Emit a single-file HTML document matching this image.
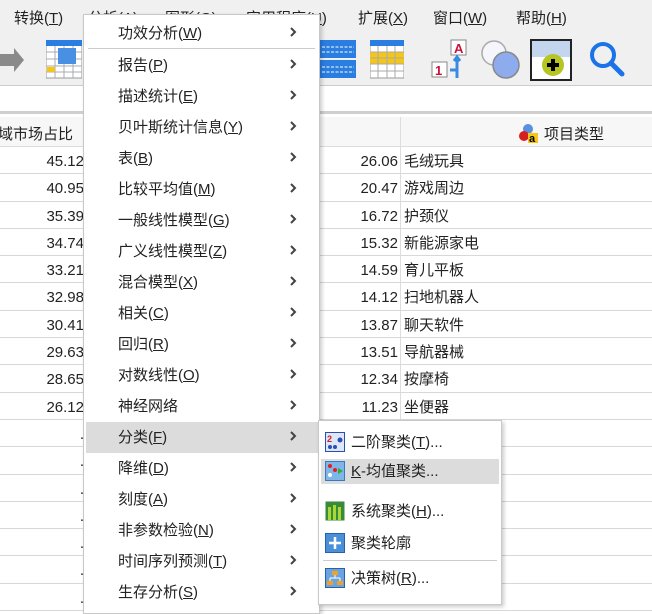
<!DOCTYPE html>
<html><head><meta charset="utf-8"><style>
*{margin:0;padding:0;box-sizing:border-box}
body{width:652px;height:600px;overflow:hidden;background:#fff;font-family:"Liberation Sans","Noto Sans CJK SC",sans-serif;font-size:15px;color:#222;position:relative}
.abs{position:absolute}
.menubar{left:0;top:0;width:652px;height:36px;background:#f0f0f0}
.menubar span{position:absolute;top:7px;font-size:15px}
.tool{left:0;top:36px;width:652px;height:50px;background:#f0f0f0;border-bottom:1px solid #ccc}
.band{left:0;top:86px;width:652px;height:28px;background:#fff;border-bottom:3px solid #cfcfcf}
.hdr{left:0;top:117px;width:652px;height:30px;background:#f7f7f7;border-bottom:1px solid #ddd}
.row{position:absolute;left:0;width:652px;height:27.3px;border-bottom:1px solid #d8d8d8}
.menu{left:83px;top:14px;width:237px;height:600px;background:#fff;border:1px solid #c8c8c8;box-shadow:2px 2px 4px rgba(0,0,0,.2)}
.mi{position:absolute;left:34px;font-size:15px}
.ar{position:absolute;left:205px;width:8px;height:12px}
.sub{left:318px;top:420px;width:184px;height:185px;background:#fff;border:1px solid #c8c8c8;box-shadow:2px 2px 4px rgba(0,0,0,.2)}
.si{position:absolute;left:32px;font-size:15px}
.ic{position:absolute;left:6px;width:20px;height:20px}
u{text-decoration:underline}
</style></head><body>
<svg width="0" height="0" style="position:absolute"><defs><symbol id="chev" viewBox="0 0 8 12"><path d="M2 2 L6 6 L2 10" stroke="#444" stroke-width="2" fill="none"/></symbol></defs></svg>
<div class="abs menubar">
<span style="left:14px">转换(<u>T</u>)</span>
<span style="left:88px">分析(A)</span>
<span style="left:165px">图形(G)</span>
<span style="left:246px">实用程序(<u>U</u>)</span>
<span style="left:358px">扩展(<u>X</u>)</span>
<span style="left:433px">窗口(<u>W</u>)</span>
<span style="left:516px">帮助(<u>H</u>)</span>
</div>
<div class="abs tool">
<svg class="abs" style="left:0;top:10px" width="25" height="30"><path d="M0 8 L14 8 L14 2 L24 14 L14 26 L14 20 L0 20Z" fill="#8a8a8a"/></svg>
<svg class="abs" style="left:46px;top:4px" width="36" height="40"><rect x="0" y="0" width="36" height="38" fill="#fff" stroke="#999"/><rect x="0" y="0" width="36" height="6" fill="#2a7de1"/><path d="M0 12H36M0 19H36M0 26H36M0 32H36M9 6V38M18 6V38M27 6V38" stroke="#aab" /><rect x="1" y="27" width="8" height="5" fill="#f5c518"/><path d="M12 8 L30 8 L30 24 L12 24Z" fill="#4a90e2"/></svg>
<svg class="abs" style="left:320px;top:4px" width="36" height="40"><rect x="0" y="0" width="36" height="18" fill="#2a7de1"/><rect x="0" y="20" width="36" height="18" fill="#2a7de1"/><path d="M2 7H34M2 12H34M2 27H34M2 32H34" stroke="#fff" stroke-dasharray="3 1.5"/></svg>
<svg class="abs" style="left:370px;top:4px" width="34" height="40"><rect x="0" y="0" width="34" height="38" fill="#fff" stroke="#999"/><rect x="0" y="0" width="34" height="6" fill="#2a7de1"/><rect x="0" y="12" width="34" height="12" fill="#f5c518"/><path d="M0 12H34M0 18H34M0 24H34M0 31H34M8 6V38M17 6V38M25 6V38" stroke="#aaa"/></svg>
<svg class="abs" style="left:430px;top:2px" width="40" height="44"><rect x="21" y="2" width="15" height="15" fill="#fff" stroke="#888"/><text x="24" y="15" font-size="13" font-weight="bold" fill="#d0103a" font-family="Liberation Sans">A</text><rect x="2" y="24" width="15" height="15" fill="#fff" stroke="#888"/><text x="5" y="37" font-size="13" font-weight="bold" fill="#d0103a" font-family="Liberation Sans">1</text><path d="M20 32 L27 32 L27 20 M24 23 L27 19 L30 23 M27 32 L27 40" stroke="#3a8be0" stroke-width="3" fill="none"/></svg>
<svg class="abs" style="left:480px;top:3px" width="42" height="42"><circle cx="14" cy="14" r="12" fill="#f4f6fb" stroke="#aaa" stroke-width="1.5"/><circle cx="26" cy="26" r="13" fill="#8eabee" stroke="#888" stroke-width="1.5"/></svg>
<svg class="abs" style="left:530px;top:3px" width="42" height="42"><rect x="1" y="1" width="40" height="40" fill="#fff" stroke="#222" stroke-width="2"/><rect x="2" y="2" width="38" height="16" fill="#c3d6ee"/><circle cx="23" cy="26" r="11" fill="#b5c622"/><path d="M23 20V32M17 26H29" stroke="#000" stroke-width="4"/></svg>
<svg class="abs" style="left:588px;top:4px" width="40" height="40"><circle cx="15" cy="15" r="11" fill="none" stroke="#1a73e8" stroke-width="4"/><path d="M23 23 L34 34" stroke="#1a73e8" stroke-width="5" stroke-linecap="round"/></svg>
</div>
<div class="abs band"></div>
<div class="abs hdr">
<span class="abs" style="left:-2px;top:6px">域市场占比</span>
<div class="abs" style="left:400px;top:0;width:1px;height:30px;background:#ddd"></div>
<svg class="abs" style="left:518px;top:6px" width="22" height="20"><circle cx="10" cy="6" r="5" fill="#5b8fe0"/><circle cx="6" cy="13" r="5" fill="#d62020"/><rect x="10" y="10" width="10" height="10" fill="#f5c518"/><text x="11" y="19" font-size="11" font-weight="bold" font-family="Liberation Sans">a</text></svg>
<span class="abs" style="left:544px;top:6px">项目类型</span>
</div>
<div class="abs" style="left:400px;top:147px;width:1px;height:275px;background:#ddd"></div>
<div class="abs" style="left:0;top:147px;width:652px">
<div class="row" style="top:0"></div><div class="row" style="top:27.3px"></div><div class="row" style="top:54.6px"></div><div class="row" style="top:81.9px"></div><div class="row" style="top:109.2px"></div><div class="row" style="top:136.5px"></div><div class="row" style="top:163.8px"></div><div class="row" style="top:191.1px"></div><div class="row" style="top:218.4px"></div><div class="row" style="top:245.7px"></div><div class="row" style="top:273px"></div><div class="row" style="top:300.3px"></div><div class="row" style="top:327.6px"></div><div class="row" style="top:354.9px"></div><div class="row" style="top:382.2px"></div><div class="row" style="top:409.5px"></div><div class="row" style="top:436.8px"></div>
</div>
<div class="abs" style="left:0;top:148px;width:84px;text-align:right;line-height:27.3px;color:#222">45.12<br>40.95<br>35.39<br>34.74<br>33.21<br>32.98<br>30.41<br>29.63<br>28.65<br>26.12<br>.<br>.<br>.<br>.<br>.<br>.<br>.</div>
<div class="abs" style="left:320px;top:148px;width:78px;text-align:right;line-height:27.3px">26.06<br>20.47<br>16.72<br>15.32<br>14.59<br>14.12<br>13.87<br>13.51<br>12.34<br>11.23</div>
<div class="abs" style="left:404px;top:148px;line-height:27.3px">毛绒玩具<br>游戏周边<br>护颈仪<br>新能源家电<br>育儿平板<br>扫地机器人<br>聊天软件<br>导航器械<br>按摩椅<br>坐便器</div>

<div class="abs menu">
<span class="mi" style="top:7px">功效分析(<u>W</u>)</span><svg class="ar" style="top:11px"><use href="#chev"/></svg>
<div class="abs" style="left:4px;top:33px;width:227px;height:1px;background:#ccc"></div>
<span class="mi" style="top:39px">报告(<u>P</u>)</span><svg class="ar" style="top:43px"><use href="#chev"/></svg>
<span class="mi" style="top:70px">描述统计(<u>E</u>)</span><svg class="ar" style="top:74px"><use href="#chev"/></svg>
<span class="mi" style="top:101px">贝叶斯统计信息(<u>Y</u>)</span><svg class="ar" style="top:105px"><use href="#chev"/></svg>
<span class="mi" style="top:132px">表(<u>B</u>)</span><svg class="ar" style="top:136px"><use href="#chev"/></svg>
<span class="mi" style="top:163px">比较平均值(<u>M</u>)</span><svg class="ar" style="top:167px"><use href="#chev"/></svg>
<span class="mi" style="top:194px">一般线性模型(<u>G</u>)</span><svg class="ar" style="top:198px"><use href="#chev"/></svg>
<span class="mi" style="top:225px">广义线性模型(<u>Z</u>)</span><svg class="ar" style="top:229px"><use href="#chev"/></svg>
<span class="mi" style="top:256px">混合模型(<u>X</u>)</span><svg class="ar" style="top:260px"><use href="#chev"/></svg>
<span class="mi" style="top:287px">相关(<u>C</u>)</span><svg class="ar" style="top:291px"><use href="#chev"/></svg>
<span class="mi" style="top:318px">回归(<u>R</u>)</span><svg class="ar" style="top:322px"><use href="#chev"/></svg>
<span class="mi" style="top:349px">对数线性(<u>O</u>)</span><svg class="ar" style="top:353px"><use href="#chev"/></svg>
<span class="mi" style="top:380px">神经网络</span><svg class="ar" style="top:384px"><use href="#chev"/></svg>
<div class="abs" style="left:2px;top:407px;width:232px;height:31px;background:#dcdcdc"></div>
<span class="mi" style="top:411px">分类(<u>F</u>)</span><svg class="ar" style="top:415px"><use href="#chev"/></svg>
<span class="mi" style="top:442px">降维(<u>D</u>)</span><svg class="ar" style="top:446px"><use href="#chev"/></svg>
<span class="mi" style="top:473px">刻度(<u>A</u>)</span><svg class="ar" style="top:477px"><use href="#chev"/></svg>
<span class="mi" style="top:504px">非参数检验(<u>N</u>)</span><svg class="ar" style="top:508px"><use href="#chev"/></svg>
<span class="mi" style="top:535px">时间序列预测(<u>T</u>)</span><svg class="ar" style="top:539px"><use href="#chev"/></svg>
<span class="mi" style="top:566px">生存分析(<u>S</u>)</span><svg class="ar" style="top:570px"><use href="#chev"/></svg>
</div>

<div class="abs sub">
<svg class="ic" style="top:11px" viewBox="0 0 20 20"><rect x="0.5" y="0.5" width="19" height="19" fill="#dfe6f7" stroke="#2850b0"/><text x="2" y="10" font-size="9" fill="#d02020" font-weight="bold" font-family="Liberation Sans">2</text><circle cx="5" cy="15" r="2" fill="#2850b0"/><circle cx="10" cy="15" r="2" fill="#2850b0"/><circle cx="15" cy="8" r="2.5" fill="#2850b0"/></svg>
<span class="si" style="top:10px">二阶聚类(<u>T</u>)...</span>
<div class="abs" style="left:2px;top:38px;width:178px;height:25px;background:#dcdcdc"></div>
<svg class="ic" style="top:40px" viewBox="0 0 20 20"><rect x="0.5" y="0.5" width="19" height="19" fill="#7fb6e8" stroke="#3b7ac0"/><circle cx="5" cy="5" r="2" fill="#e02020"/><circle cx="5" cy="14" r="2" fill="#fff"/><circle cx="10" cy="9" r="2" fill="#e02020"/><path d="M13 7 L18 10 L13 13Z" fill="#30b030"/></svg>
<span class="si" style="top:39px"><u>K</u>-均值聚类...</span>
<svg class="ic" style="top:80px" viewBox="0 0 20 20"><rect x="0.5" y="0.5" width="19" height="19" fill="#3a8a3a"/><rect x="3" y="6" width="3" height="13" fill="#a8d838"/><rect x="8" y="4" width="3" height="15" fill="#a8d838"/><rect x="13" y="6" width="3" height="13" fill="#a8d838"/></svg>
<span class="si" style="top:79px">系统聚类(<u>H</u>)...</span>
<svg class="ic" style="top:112px" viewBox="0 0 20 20"><rect x="0.5" y="0.5" width="19" height="19" fill="#4a90d8" stroke="#2a60a8"/><path d="M10 4V16M4 10H16" stroke="#fff" stroke-width="2.5"/></svg>
<span class="si" style="top:111px">聚类轮廓</span>
<div class="abs" style="left:4px;top:139px;width:174px;height:1px;background:#ccc"></div>
<svg class="ic" style="top:147px" viewBox="0 0 20 20"><rect x="0.5" y="0.5" width="19" height="19" fill="#6aa4e0" stroke="#2a60a8"/><rect x="7" y="3" width="6" height="4" fill="#f5a020"/><rect x="2" y="13" width="6" height="4" fill="#f5a020"/><rect x="12" y="13" width="6" height="4" fill="#f5a020"/><path d="M10 7V10M5 10H15M5 10V13M15 10V13" stroke="#fff"/></svg>
<span class="si" style="top:146px">决策树(<u>R</u>)...</span>
</div>
</body></html>
